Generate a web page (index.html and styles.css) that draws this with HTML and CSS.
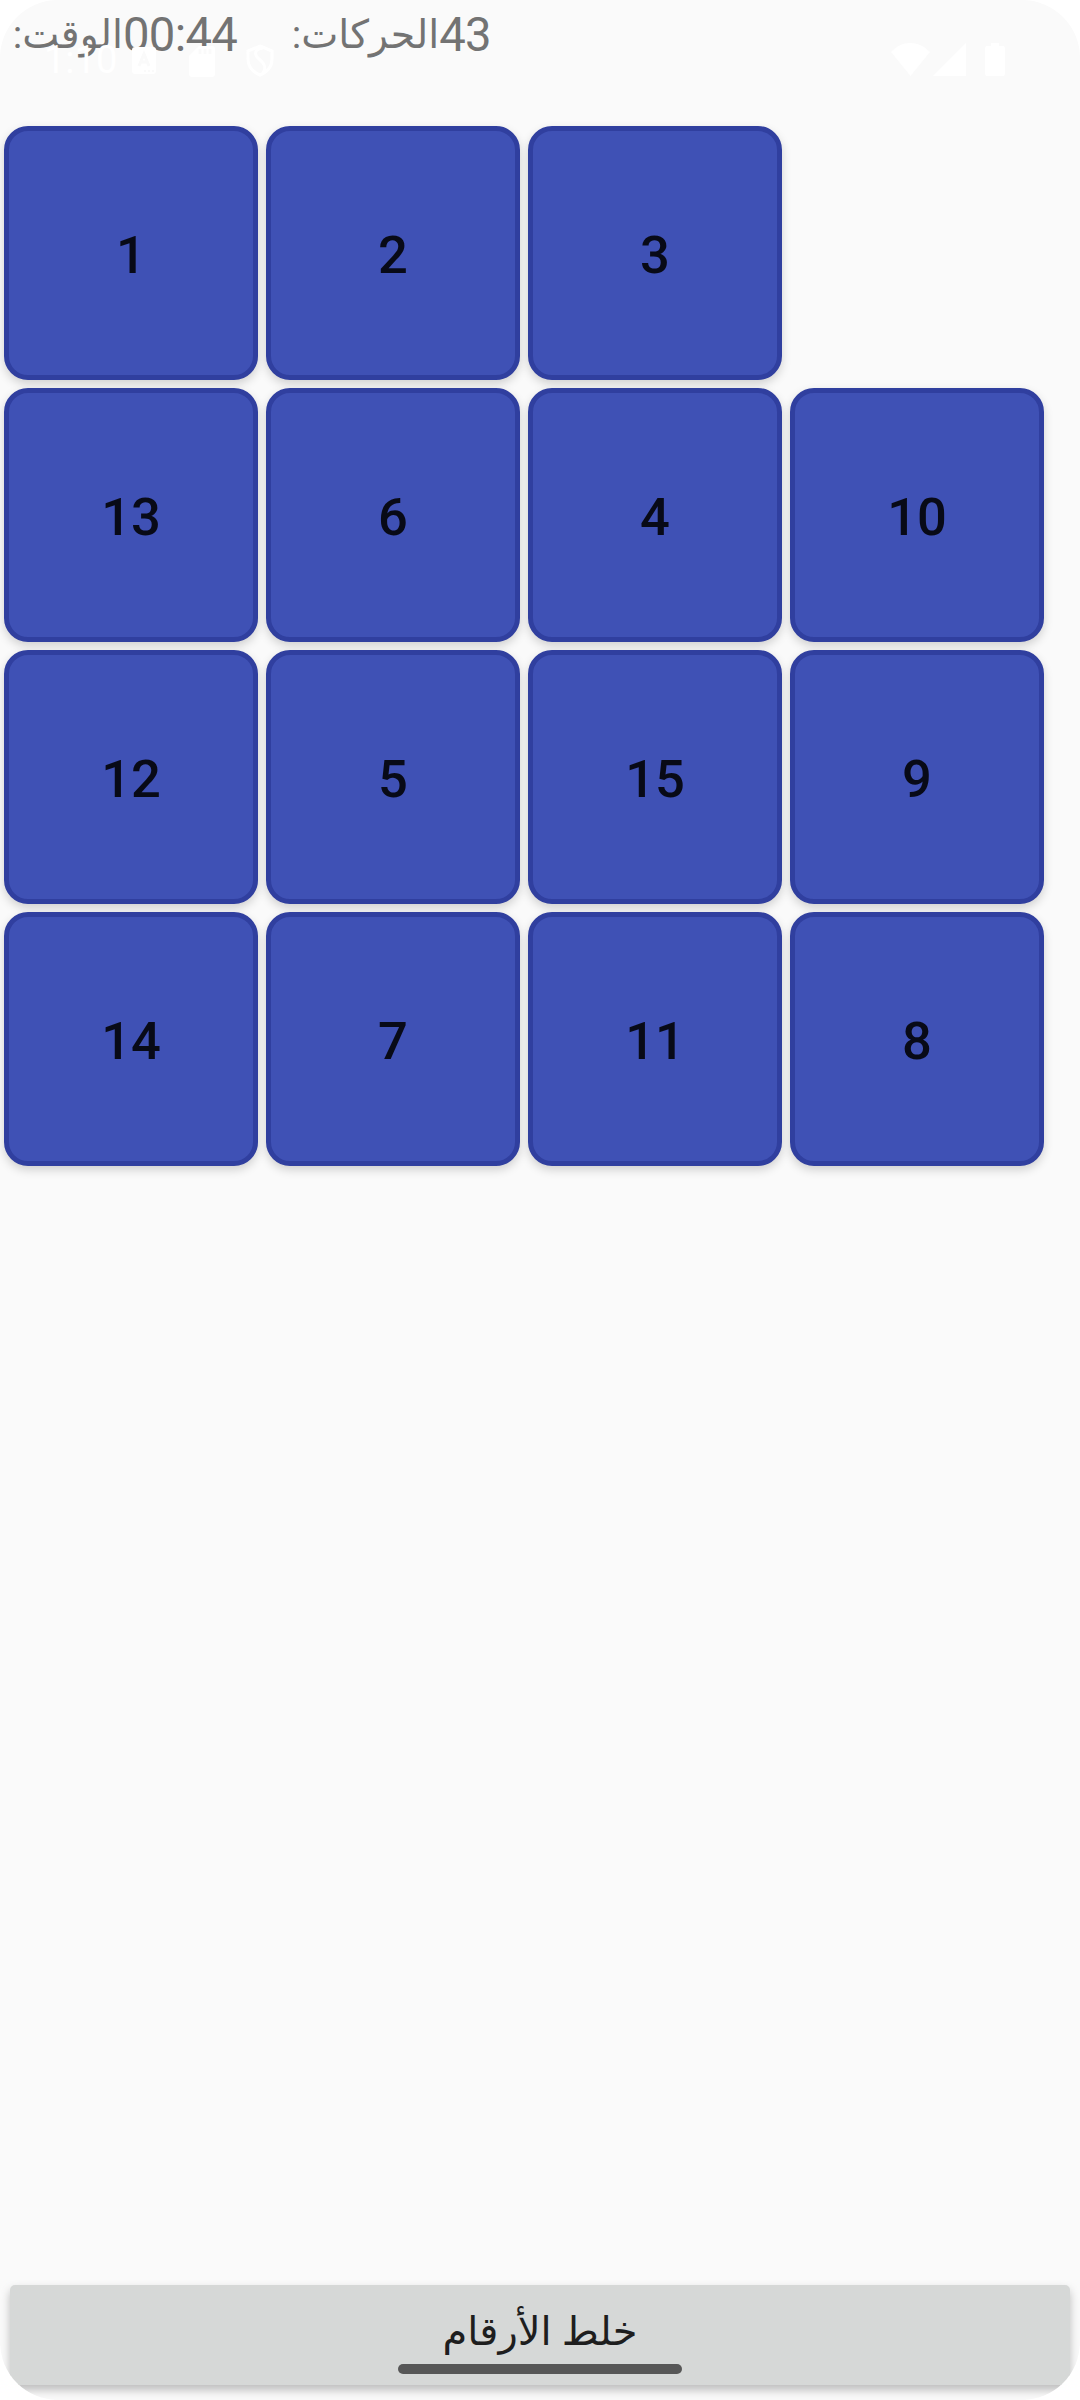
FILE: index.html
```html
<!DOCTYPE html>
<html lang="ar">
<head>
  <meta charset="utf-8">
  <meta name="viewport" content="width=device-width, initial-scale=1.0">
  <title>خلط الأرقام</title>
  <link rel="stylesheet" href="styles.css">
</head>
<body>
  <div class="screen">
    <div class="stats">
      <div class="stat"><span class="label time" dir="rtl">الوقت:</span><span class="value">00:44</span></div>
      <div class="stat"><span class="label moves" dir="rtl">الحركات:</span><span class="value">43</span></div>
    </div>

    <div class="board">
      <button class="tile">1</button>
      <button class="tile">2</button>
      <button class="tile">3</button>
      <div class="empty"></div>
      <button class="tile">13</button>
      <button class="tile">6</button>
      <button class="tile">4</button>
      <button class="tile">10</button>
      <button class="tile">12</button>
      <button class="tile">5</button>
      <button class="tile">15</button>
      <button class="tile">9</button>
      <button class="tile">14</button>
      <button class="tile">7</button>
      <button class="tile">11</button>
      <button class="tile">8</button>
    </div>

    <button class="shuffle" dir="rtl">خلط الأرقام</button>

    <!-- system bars, drawn over the app -->
    <div class="status-bar">
      <span class="clock">1:10</span>
      <svg class="icon-left" width="148" height="36" viewBox="0 0 148 36">
        <rect x="2" y="5" width="24" height="27" rx="3" fill="#fff"/>
        <path d="M9 24l5-12 5 12M11 20h6" fill="none" stroke="#fafafa" stroke-width="3"/>
        <path d="M14 29h2m2 0h2m2 0h2" stroke="#fafafa" stroke-width="2"/>
        <path d="M69 4h13a3 3 0 0 1 3 3v25a3 3 0 0 1-3 3H62a3 3 0 0 1-3-3V14z" fill="#fff"/>
        <path d="M70 7v5m5-5v5m5-5v5" stroke="#fafafa" stroke-width="3"/>
        <path d="M130 4l12 5v8c0 8-5 13-12 16-7-3-12-8-12-16V9zM133 6c-9 1-9 7-4 11s8 8 4 14" fill="none" stroke="#fff" stroke-width="3"/>
      </svg>
      <svg class="icon-right" width="116" height="36" viewBox="0 0 116 36">
        <path d="M1 10C12-2 28-2 40 10L20.500 34z" fill="#fff"/>
        <path d="M76 1v33H43z" fill="#fff"/>
        <path d="M101 1h8v3h4a2 2 0 0 1 2 2v26a2 2 0 0 1-2 2H97a2 2 0 0 1-2-2V6a2 2 0 0 1 2-2h4z" fill="#fff"/>
      </svg>
    </div>
    <div class="nav-handle"></div>
  </div>
</body>
</html>
```
FILE: styles.css
```css
* {
  box-sizing: border-box;
}

body {
  margin: 0;
  background: #fff;
  font-family: Roboto, "DejaVu Sans", sans-serif;
}

button {
  margin: 0;
  padding: 0;
  font-family: inherit;
}

.screen {
  position: relative;
  display: flex;
  flex-direction: column;
  width: 1080px;
  height: 2400px;
  overflow: hidden;
  background: #fafafa;
  border-radius: 58px;
}

.stats {
  display: flex;
  height: 126px;
  padding: 4px 0 0 12px;
  color: #737373;
  font-size: 47.25px;
  line-height: 62px;
}

.stat {
  display: flex;
}

.stat + .stat {
  margin-left: 54px;
}

.value {
  letter-spacing: -0.7px;
}

.label {
  font-size: 39.4px;
  white-space: nowrap;
}

.time {
  width: 111px;
}

.moves {
  width: 148px;
}

.board {
  display: grid;
  grid-template-columns: repeat(4, 254px);
  grid-auto-rows: 254px;
  gap: 8px;
  padding-left: 4px;
}

.tile {
  padding-top: 3px;
  border: 5px solid #303f9f;
  border-radius: 24px;
  background: #3f51b5;
  color: #080a17;
  font-size: 52.5px;
  font-weight: 500;
  box-shadow: 0 4px 10px rgba(0, 0, 0, 0.17);
}

.shuffle {
  height: 100px;
  margin: auto 10px 15px;
  padding-bottom: 7px;
  border: 0;
  border-radius: 5px;
  background: #d6d8d7;
  color: #1e1e1e;
  font-size: 40px;
  box-shadow: 0 5px 10px rgba(0, 0, 0, 0.25);
}

.status-bar {
  position: absolute;
  top: 42px;
  left: 0;
  display: flex;
  width: 100%;
  height: 36px;
  padding: 0 74px 0 44px;
  color: #fff;
}

.clock {
  width: 86px;
  font-size: 38px;
  line-height: 36px;
}

.icon-right {
  margin-left: auto;
}

.nav-handle {
  position: absolute;
  left: 398px;
  bottom: 26px;
  width: 284px;
  height: 10px;
  border-radius: 5px;
  background: #575757;
}
```
